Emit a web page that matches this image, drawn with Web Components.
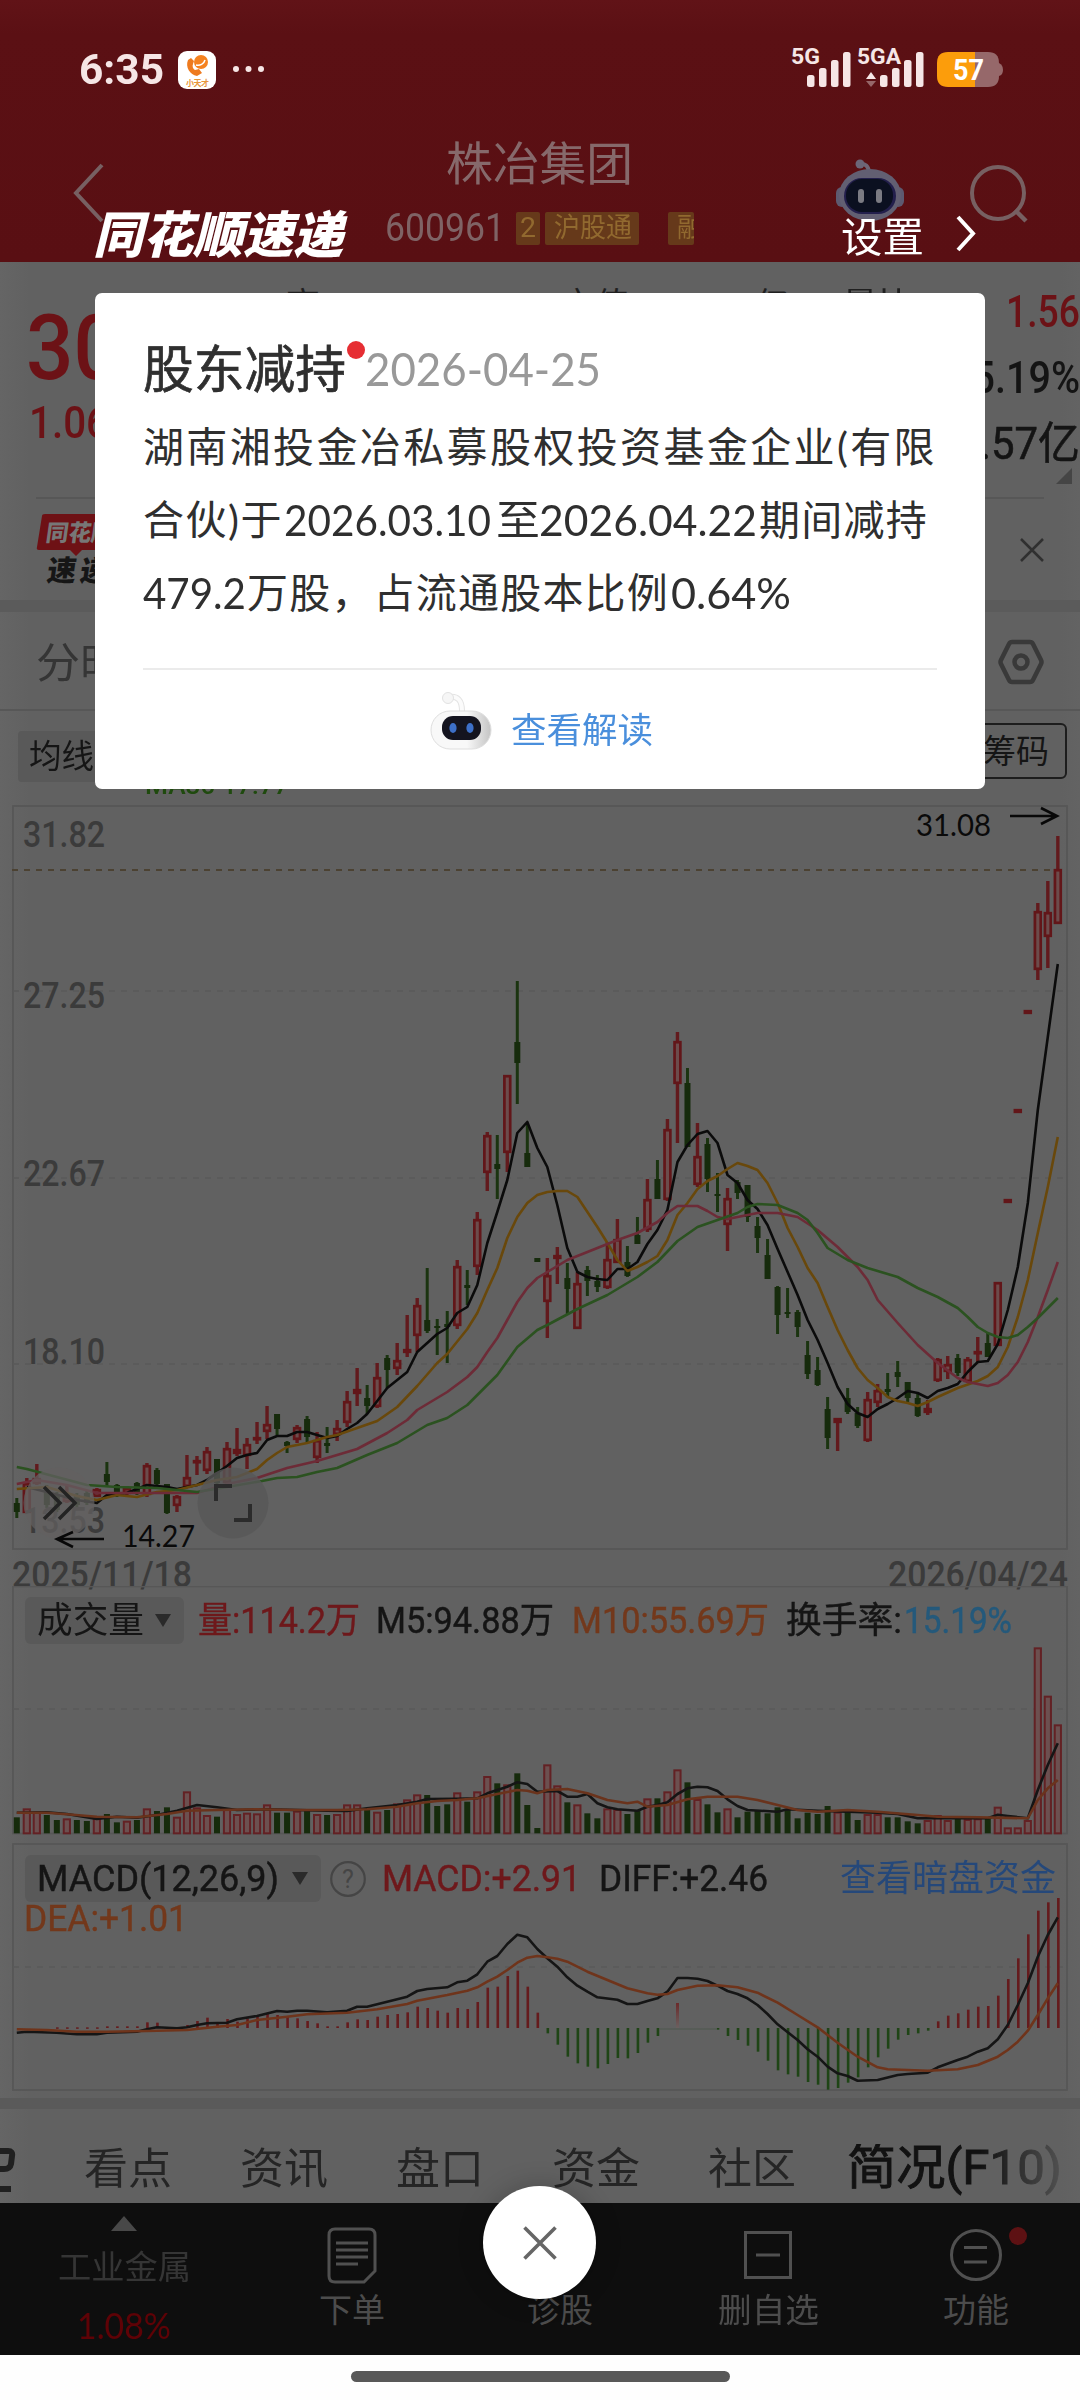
<!DOCTYPE html>
<html lang="zh-CN">
<head>
<meta charset="utf-8">
<title>株冶集团 600961</title>
<style>
  html, body { margin: 0; padding: 0; background: #616161; }
  body { width: 1080px; height: 2400px; overflow: hidden; font-family: Roboto, "Noto Sans CJK SC", sans-serif; }
</style>
</head>
<body>
<stock-page></stock-page>

<script>
/* Base class: renders markup and styles into an open shadow root. */
class Base extends HTMLElement {
  constructor() {
    super();
    this.attachShadow({ mode: 'open' });
  }
  connectedCallback() {
    if (this.ready) return;
    this.ready = true;
    this.shadowRoot.innerHTML = '<style>*{box-sizing:border-box}' + this.css() + '</style>' + this.html();
  }
  css() { return ':host{display:block}'; }
  html() { return '<slot></slot>'; }
}

/* One line of text stretched or squeezed to an exact width. */
customElements.define('fit-text', class extends Base {
  css() {
    return `:host{display:block;flex:none;white-space:nowrap;line-height:1}
      span{display:inline-block;transform-origin:0 0;line-height:1;vertical-align:top}`;
  }
  html() { return '<span><slot></slot></span>'; }
  connectedCallback() {
    super.connectedCallback();
    const w = +this.getAttribute('w');
    const span = this.shadowRoot.querySelector('span');
    this.style.width = w + 'px';
    const natural = span.getBoundingClientRect().width;
    if (this.hasAttribute('spaced')) {
      span.style.letterSpacing = (w - natural) / this.textContent.length + 'px';
    } else if (natural) {
      span.style.transform = 'scaleX(' + w / natural + ')';
    }
  }
});

customElements.define('status-bar', class extends Base {
  css() {
    return `:host{display:flex;height:104px;padding:34px 77px 0 79px;align-items:flex-start;color:#f6e6e6}
      .time{font-size:43px;font-weight:700;margin-top:14px}
      svg{flex:none;display:block}
      .app{margin:17px 0 0 14px}.dots{margin:31px 0 0 16px}.sig{margin:12px -3px 0 auto}.bat{margin:18px 0 0 16px}`;
  }
  html() {
    const bars = x => [12, 19, 27, 35].map((h, i) =>
      `<rect x="${x + i * 12}" y="${41 - h}" width="7.5" height="${h}" rx="2.5" fill="#f6e6e6"/>`).join('');
    return `<fit-text class="time" w="85">6:35</fit-text>
    <svg class="app" width="38" height="38" viewBox="0 0 38 38"><rect width="38" height="38" rx="9" fill="#fff"/>
      <path d="M10 9c-3 7 2 15 9 16l5-3-3-4-4 1c-2-1-3-4-2-6l1-3-3-3z" fill="#ee7a1e"/><circle cx="23" cy="11" r="7" fill="#f58220"/>
      <path d="M18 14c4 1 8-1 9-5" stroke="#fff" stroke-width="1.5" fill="none"/>
      <text x="8" y="35" font-size="8" font-weight="700" fill="#e8963c" textLength="23" font-family="Noto Sans CJK SC">小天才</text></svg>
    <svg class="dots" width="32" height="8"><g fill="#f6e6e6"><circle cx="4" cy="4" r="3"/><circle cx="16.500" cy="4" r="3"/><circle cx="29" cy="4" r="3"/></g></svg>
    <svg class="sig" width="133" height="42" viewBox="0 0 133 42"><g font-family="Roboto" font-weight="700" font-size="22" fill="#f6e6e6">
      <text x="0" y="18" textLength="29" lengthAdjust="spacingAndGlyphs">5G</text><text x="66" y="18" textLength="44" lengthAdjust="spacingAndGlyphs">5GA</text></g>
      ${bars(16)}${bars(89)}
      <path d="M75 33l5-7 5 7z" fill="#f6e6e6"/><path d="M75 35l5 6 5-6z" fill="#96686a"/></svg>
    <svg class="bat" width="66" height="35" viewBox="0 0 66 35"><path d="M60 11h2q4 2 4 7t-4 6h-2z" fill="#96686a"/>
      <path d="M38 0h13q11 0 11 11v13q0 11-11 11H38z" fill="#96686a"/><path d="M38 0H11Q0 0 0 11v13q0 11 11 11h27z" fill="#fc9d0b"/>
      <text x="16" y="28" font-family="Roboto" font-weight="700" font-size="29" fill="#fff" textLength="31" lengthAdjust="spacingAndGlyphs">57</text></svg>`;
  }
});

customElements.define('app-header', class extends Base {
  css() {
    return `:host{display:block;height:262px;background:linear-gradient(#611317 0,#5b1014 34px,#590f13);color:#86696b}
      .bar{display:flex;align-items:flex-start;padding-left:73px}
      svg{flex:none;display:block}
      .mid{width:309px;margin:37px 0 0 281px}
      .name{font-size:46px;margin-left:61px}
      .sub{display:flex;height:33px;margin-top:25px;align-items:center;color:#7f6365;font-size:39px}
      .tag{height:33px;background:#66391a;color:#91692f;font-size:27px;display:flex;align-items:center;overflow:hidden;border-radius:2px;flex:none}`;
  }
  html() {
    return `<status-bar></status-bar><div class="bar">
    <svg style="margin-top:58px" width="31" height="62"><path d="M29 3L3 31L29 59" fill="none" stroke="#776062" stroke-width="4"/></svg>
    <div class="mid"><fit-text class="name" w="187">株冶集团</fit-text>
      <div class="sub"><fit-text w="120">600961</fit-text>
        <div class="tag" style="width:24px;margin-left:11px;padding-left:4px"><fit-text w="16">2</fit-text></div>
        <div class="tag" style="width:94px;margin-left:5px;padding-left:9px"><fit-text w="78">沪股通</fit-text></div>
        <div class="tag" style="width:26px;margin-left:29px;padding-left:9px"><fit-text w="26">融</fit-text></div></div></div>
    <svg style="margin:55px 0 0 142px" width="68" height="66" viewBox="0 0 68 66">
      <path d="M24 5q8-1 9 8" fill="none" stroke="#6f6677" stroke-width="4"/><circle cx="24" cy="5" r="4.500" fill="#6b6678"/>
      <rect x="0" y="28" width="12" height="20" rx="6" fill="#5d5a70"/><rect x="56" y="28" width="12" height="20" rx="6" fill="#5d5a70"/>
      <ellipse cx="34" cy="36" rx="31" ry="26" fill="#625f72"/><rect x="8" y="19" width="52" height="36" rx="18" fill="#231f4c"/><rect x="10" y="20" width="47" height="33" rx="16" fill="#0b1020"/>
      <rect x="22" y="30" width="6" height="14" rx="3" fill="#7b7b83"/><rect x="40" y="30" width="6" height="14" rx="3" fill="#7b7b83"/></svg>
    <svg style="margin:61px 0 0 66px" width="58" height="58"><circle cx="28" cy="28" r="26" fill="none" stroke="#776062" stroke-width="4"/><path d="M45 45L56 56" stroke="#776062" stroke-width="4.500"/></svg></div>`;
  }
});

customElements.define('quote-strip', class extends Base {
  css() {
    return `:host{display:flex;height:235px;position:relative;overflow:hidden;justify-content:space-between}
      .l{width:110px;color:#6c1216;font-weight:500;padding:42px 0 0 26px;flex:none}
      .big{font-size:90px}.chg{font-size:45px;margin:6px 0 0 3px}
      .m{display:flex;padding-top:26px;width:770px;font-size:34px;color:#202020;flex:none}
      .r{display:flex;flex-direction:column;align-items:flex-end;font-size:44px;font-weight:500;color:#141414;padding-top:28px;gap:22px;width:200px;flex:none}
      .cn{font-weight:400;-webkit-text-stroke:.6px #141414}
      .red{color:#6c1216}
      i{display:block;border:8px solid transparent;border-right-color:#454545;border-bottom-color:#454545;margin:-20px 8px 0 0}`;
  }
  html() {
    return `<div class="l"><fit-text class="big" w="95">30</fit-text><fit-text class="chg" w="80">1.06</fit-text></div>
      <div class="m"><fit-text w="34" style="margin-left:176px">高</fit-text><fit-text w="68" style="margin-left:241px">市值</fit-text>
      <fit-text w="34" style="margin-left:126px">亿</fit-text><fit-text w="72" style="margin-left:53px">量比</fit-text></div>
      <div class="r"><fit-text w="74" class="red">1.56</fit-text><fit-text w="130">15.19%</fit-text><fit-text w="100" class="cn">.57亿</fit-text><i></i></div>`;
  }
});

customElements.define('promo-row', class extends Base {
  css() {
    return `:host{display:flex;justify-content:space-between;height:103px;margin:0 36px;border-top:2px solid #575757}
      svg{display:block;flex:none}`;
  }
  html() {
    return `<svg width="120" height="80" viewBox="0 0 120 80" style="margin-top:14px"><path d="M6 3q0-2 3-2h105l-6 36H46l-6 6-6-6H3q-3 0-2-3z" fill="#6e1115"/>
      <g font-family="Noto Sans CJK SC" font-weight="900" font-size="23"><text transform="translate(9 28) skewX(-8)" fill="#777" textLength="68" lengthAdjust="spacingAndGlyphs">同花顺</text>
      <text transform="translate(10 68) skewX(-8)" font-size="29" fill="#161616" textLength="62">速递</text></g></svg>
      <svg width="24" height="24" style="margin:39px 0 0"><path d="M1 1L23 23M23 1L1 23" stroke="#303030" stroke-width="2.500"/></svg>`;
  }
});

customElements.define('period-tabs', class extends Base {
  css() {
    return `:host{display:flex;justify-content:space-between;align-items:center;height:111px;border-top:12px solid #5b5b5b;border-bottom:2px solid #575757;padding:2px 36px 0;font-size:42px;color:#353535}
      fit-text{margin-top:4px}`;
  }
  html() {
    return `<fit-text w="88">分时</fit-text><svg width="46" height="46" viewBox="0 0 46 46" fill="none" stroke="#393939" stroke-width="4.500"><path d="M14 3h18q2 0 3 2l8 16q1 2 0 4l-8 16q-1 2-3 2H14q-2 0-3-2L3 25q-1-2 0-4L11 5q1-2 3-2z" stroke-linejoin="round"/><circle cx="23" cy="23" r="6.500"/></svg>`;
  }
});

customElements.define('ma-row', class extends Base {
  css() {
    return `:host{display:flex;justify-content:space-between;height:94px;align-items:flex-start;font-size:33px;color:#151515;overflow:hidden}
      .chip{background:#595959;width:120px;height:51px;margin:20px 0 0 18px;padding:9px 0 0 11px;border-radius:4px}
      .ma{font-size:25px;font-weight:500;color:#1f4a0e;margin:62px auto 0 7px}
      .box{border:2px solid #1d1d1d;border-radius:6px;width:110px;height:56px;margin:12px 13px 0 0;padding:10px 0 0 24px}`;
  }
  html() {
    return `<div class="chip"><fit-text w="65">均线</fit-text></div><fit-text class="ma" w="144">MA30 17.77</fit-text><div class="box"><fit-text w="66">筹码</fit-text></div>`;
  }
});

/* ---------- chart data ---------- */
const X = i => 16.800 + 10.010 * i;
const CANDLES = [
 'g 1498 1518 1503 1512','r 1478 1513 1483 1513','r 1464 1485 1478 1484','g 1485 1508 1490 1505','g 1492 1512 1495 1510','r 1485 1503 1496 1502','g 1493 1507 1495 1505','g 1491 1505 1493 1503','r 1488 1497 1489 1497','g 1462 1487 1474 1482',
 'g 1484 1497 1485 1493','r 1486 1496 1488 1494','g 1482 1495 1483 1493','r 1463 1497 1465 1495','g 1468 1485 1470 1484','g 1484 1514 1484 1513','r 1495 1512 1496 1506','r 1455 1488 1477 1487','r 1456 1475 1460 1463','r 1447 1474 1451 1471',
 'g 1459 1487 1459 1483','r 1442 1484 1448 1483','r 1428 1456 1449 1454','r 1438 1469 1444 1456','r 1422 1444 1437 1440','r 1406 1439 1424 1432','g 1414 1435 1414 1429','g 1441 1453 1442 1446','r 1425 1443 1427 1440','g 1416 1443 1419 1437',
 'r 1432 1463 1440 1458','g 1427 1453 1443 1446','r 1420 1441 1428 1435','r 1391 1427 1401 1423','r 1368 1406 1389 1394','g 1385 1414 1398 1406','r 1363 1408 1377 1407','g 1355 1388 1358 1370','r 1343 1375 1360 1369','r 1315 1357 1349 1353',
 'r 1298 1352 1305 1336','g 1268 1333 1320 1331','g 1319 1355 1326 1328','g 1311 1363 1324 1327','r 1260 1329 1266 1326','g 1270 1305 1285 1288','r 1212 1275 1219 1267','r 1132 1191 1135 1173','g 1135 1199 1164 1169','r 1075 1172 1075 1153',
 'g 981 1104 1042 1063','g 1123 1167 1153 1167','g 1258 1262 1258 1262','r 1258 1338 1275 1302','r 1247 1284 1255 1259','g 1263 1315 1278 1289','r 1272 1329 1283 1329','g 1266 1296 1270 1281','g 1275 1292 1281 1287','r 1242 1289 1259 1288',
 'r 1219 1263 1239 1263','g 1246 1277 1262 1276','g 1217 1244 1235 1244','r 1179 1232 1199 1230','g 1160 1199 1179 1199','r 1119 1201 1129 1200','r 1032 1143 1041 1084','g 1068 1147 1083 1147','r 1123 1187 1156 1185','g 1138 1192 1144 1179',
 'g 1173 1212 1194 1196','r 1188 1251 1198 1225','g 1180 1199 1182 1193','g 1185 1222 1185 1217','g 1217 1253 1226 1238','g 1239 1279 1255 1279','g 1286 1334 1287 1315','g 1288 1318 1312 1314','g 1310 1337 1312 1327','g 1341 1379 1355 1374',
 'g 1357 1386 1370 1385','g 1397 1449 1409 1438','r 1418 1451 1418 1423','g 1388 1414 1398 1412','g 1407 1428 1413 1426','r 1392 1442 1399 1441','r 1384 1407 1390 1403','g 1373 1397 1389 1392','g 1361 1387 1372 1377','g 1382 1402 1382 1398',
 'g 1393 1417 1398 1416','r 1400 1415 1408 1413','r 1358 1382 1359 1381','r 1356 1379 1364 1372','g 1354 1376 1358 1373','r 1357 1383 1359 1382','r 1337 1362 1351 1353','g 1333 1357 1343 1357','r 1282 1346 1282 1346','r 1201 1201 1199 1203',
 'r 1111 1111 1109 1113','r 1012 1012 1010 1014','r 903 980 911 970','r 881 968 912 937','r 836 924 869 924'
].map(s => { const p = s.split(' '); return { up: p[0] === 'r', hi: +p[1], lo: +p[2], a: +p[3], b: +p[4] }; });

const MA = {
 '#0b0b0b': '1:1487 3:1492 6:1500 8:1503 9:1495 11:1493 13:1485 15:1487 16:1489 18:1485 19:1480 21:1466 22:1458 23:1455 24:1453 25:1440 26:1436 27:1436 28:1432 29:1432 30:1435 31:1438 32:1436 33:1429 34:1423 35:1414 36:1401 37:1388 38:1380 39:1372 40:1352 41:1343 42:1334 43:1328 44:1313 45:1307 46:1285 47:1243 48:1212 49:1180 50:1133 51:1122 52:1148 53:1167 54:1205 55:1248 56:1272 57:1277 58:1279 59:1280 60:1269 61:1269 62:1262 63:1244 64:1230 65:1210 66:1162 67:1145 68:1134 69:1131 70:1143 71:1175 72:1183 73:1200 74:1209 75:1225 76:1249 77:1272 78:1295 79:1320 80:1340 81:1363 82:1387 83:1404 84:1413 85:1417 86:1409 87:1404 88:1398 89:1391 90:1393 91:1398 92:1391 93:1388 94:1384 95:1372 96:1362 97:1361 98:1344 99:1310 100:1267 101:1203 102:1110 103:1037 104:964',
 '#69480b': '0:1489 3:1487 6:1496 8:1500 10:1495 12:1497 14:1492 16:1490 18:1485 20:1480 22:1477 24:1469 25:1460 26:1453 27:1447 29:1443 31:1437 32:1435 34:1428 36:1421 38:1407 40:1386 42:1363 43:1354 45:1329 46:1313 47:1290 48:1268 49:1238 50:1217 51:1203 52:1195 53:1192 54:1191 55:1191 56:1197 57:1212 58:1227 59:1243 60:1260 61:1271 62:1267 63:1262 64:1256 65:1240 66:1215 67:1203 68:1189 69:1181 70:1176 71:1169 72:1163 73:1166 74:1170 75:1183 76:1203 77:1228 78:1247 79:1268 80:1283 81:1307 82:1330 83:1350 84:1368 85:1380 86:1388 87:1397 88:1401 89:1403 90:1406 91:1402 92:1397 94:1388 96:1381 97:1376 98:1367 99:1347 100:1317 101:1280 102:1233 103:1187 104:1137',
 '#6d2b37': '0:1484 2:1480 5:1485 8:1493 11:1493 14:1493 18:1493 21:1484 24:1478 27:1468 30:1461 34:1449 37:1433 39:1420 40:1410 42:1398 43:1392 45:1377 46:1367 47:1352 48:1338 49:1320 50:1302 51:1288 52:1278 53:1272 55:1260 57:1252 60:1240 62:1233 64:1222 65:1213 66:1206 68:1206 69:1211 70:1217 71:1219 72:1217 74:1213 76:1213 78:1217 80:1230 82:1247 84:1267 85:1280 86:1300 88:1323 90:1345 92:1363 94:1378 95:1382 97:1386 98:1383 99:1375 100:1362 101:1342 102:1317 103:1290 104:1262',
 '#2b5220': '0:1467 1:1469 4:1477 7:1485 10:1487 14:1488 18:1492 21:1487 24.500:1481 26:1478 28:1477 30:1472 32:1468 35:1455 38:1443 41:1425 43:1418 45:1405 48:1375 50:1347 52:1330 53:1325 56:1309 59:1295 62:1277 64:1262 66:1241 68:1227 70:1220 72:1213 73:1207 74:1204 76:1205 78:1213 79:1220 80:1233 81:1248 83:1260 85:1268 88:1277 90:1288 92:1297 94:1308 95:1317 96:1327 97:1333 98:1337 99:1338 100:1335 101:1327 102:1318 103:1308 104:1298'
};

/* Lower-panel values sit on a grid of a third of a pixel that starts at y = 1590. */
const Y3 = v => 1590 + v / 3;
const VOL = [682,655,665,675,690,685,690,693,683,672,697,692,690,655,663,652,680,604,652,675,680,655,672,668,670,643,668,668,662,662,672,675,672,643,643,660,665,660,640,628,613,615,648,643,607,635,604,558,580,583,550,645,714,523,586,637,643,670,685,655,657,672,660,625,625,604,538,577,627,643,667,655,682,665,662,670,652,660,685,668,672,648,665,660,690,672,672,682,682,694,700,690,675,690,685,687,685,685,650,712,712,690,172,317,403];
const VMA = {
 '#151515': '0:668 3:667 5:672 8:687 10:680 12:683 14:675 16:662 18:645 20:652 22:660 25:658 28:660 31:662 33:663 35:655 38:645 40:635 41:627 44:626 46:625 47:610 48:600 49:590 50:577 51:582 52:605 54:603 55:620 56:620 57:612 58:640 59:652 60:658 62:662 63:650 64:645 65:637 66:612 67:595 68:590 69:592 70:603 71:628 72:648 73:660 76:665 77:658 80:662 83:665 86:668 88:672 90:685 93:685 97:685 98:674 99:678 101:685 102:600 103:525 104:460',
 '#6a331c': '0:668 3:668 5:673 8:680 12:682 15:672 17:662 20:660 24:658 28:660 32:660 35:658 38:650 40:640 42:633 44:630 46:625 48:612 50:600 51:602 52:610 53:600 55:597 57:610 59:630 61:640 62:635 63:650 65:645 67:628 69:620 72:620 74:630 76:645 78:660 80:665 83:660 86:665 90:675 92:680 96:682 101:685 102:630 103:595 104:570'
};
const HIST = '4:1312 5:1312 6:1312 7:1312 8:1312 9:1309 10:1309 11:1309 12:1309 13:1297 14:1298 16:1311 17:1305 18:1293 19:1283 20:1300 21:1287 22:1295 23:1285 24:1280 25:1270 26:1275 27:1280 28:1285 29:1293 30:1300 31:1309 32:1309 33:1297 34:1288 35:1290 36:1280 37:1275 38:1272 39:1267 40:1250 41:1254 42:1262 43:1268 44:1254 45:1257 46:1236 47:1193 48:1190 49:1158 50:1142 51:1190 52:1268 53:1330 54:1364 55:1400 56:1420 57:1430 58:1435 59:1422 60:1404 61:1405 62:1389 63:1358 64:1338 70:1319 71:1338 72:1350 73:1367 74:1385 75:1412 76:1441 77:1453 78:1460 79:1476 80:1484 81:1499 82:1494 83:1478 84:1462 85:1432 86:1402 87:1376 88:1349 89:1335 90:1330 91:1322 92:1294 93:1277 94:1270 95:1259 96:1250 97:1248 98:1217 99:1167 100:1105 101:1033 102:962 103:937 104:924';
const MACD = {
 '#151515': '0:1328 1:1325 4:1328 6:1333 8:1333 9:1328 12:1325 13:1318 14:1312 16:1315 17:1312 18:1305 19:1300 21:1298 22:1288 24:1278 26:1263 27:1265 28:1262 29:1262 31:1267 33:1262 34:1250 35:1250 37:1235 39:1220 40:1203 41:1197 43:1192 44:1177 45:1172 46:1153 47:1115 48:1098 49:1062 50:1034 51:1042 52:1077 53:1105 54:1130 55:1162 56:1187 57:1205 58:1222 60:1229 61:1242 62:1242 63:1233 64:1225 65:1205 66:1164 67:1164 68:1166 69:1173 70:1187 71:1203 72:1212 73:1225 74:1245 75:1272 76:1303 78:1350 79:1378 80:1400 81:1430 82:1450 83:1458 84:1472 86:1470 88:1455 89:1452 91:1448 92:1432 94:1410 95:1400 96:1385 97:1375 98:1348 99:1305 100:1245 101:1180 102:1100 103:1035 104:982',
 '#6f341b': '0:1318 3:1320 6:1325 9:1325 13:1323 17:1320 20:1310 22:1305 24:1290 27:1280 29:1273 33:1268 36:1258 39:1242 40:1232 43:1215 45:1202 46:1192 47:1175 48:1160 49:1140 50:1118 51:1103 52:1098 53:1102 54:1106 55:1115 57:1145 59:1170 61:1195 63:1210 64:1214 65:1212 66:1200 68:1187 70:1186 72:1192 74:1208 76:1238 78:1275 80:1312 82:1358 84:1400 86:1432 87:1438 89:1440 91:1442 94:1438 96:1425 98:1400 99:1380 100:1355 101:1322 102:1275 103:1225 104:1180'
};
const lines = (set, fy) => Object.entries(set).map(([c, s]) =>
  `<polyline fill="none" stroke="${c}" stroke-width="2.600" stroke-linejoin="round" points="${s.split(' ').map(p => { const [i, v] = p.split(':'); return X(+i).toFixed(1) + ',' + fy(+v).toFixed(1); }).join(' ')}"/>`).join('');
const grid = (y, c = '#5a5a5a') => `<path d="M13 ${y}H1067" stroke="${c}" stroke-width="1.500" stroke-dasharray="6 6"/>`;
const frame = (y, h) => `<rect x="13" y="${y}" width="1054" height="${h}" fill="none" stroke="#575757" stroke-width="1.800"/>`;

customElements.define('candle-chart', class extends Base {
  css() { return ':host{display:block;height:781px}svg{display:block;overflow:visible}'; }
  html() {
    const bodies = CANDLES.map((c, i) => {
      const x = X(i), top = Math.min(c.a, c.b), h = Math.max(2, c.b - c.a);
      if (c.up) return `<path d="M${x} ${c.hi}V${top}M${x} ${top + h}V${c.lo}" stroke="#621a1d" stroke-width="3.400"/>
        <rect x="${x - 2.900}" y="${top + 1.200}" width="5.800" height="${Math.max(1, h - 2.400)}" fill="#6c4c4c" stroke="#621619" stroke-width="2.700"/>`;
      return `<path d="M${x} ${c.hi}V${c.lo}" stroke="#1b3410" stroke-width="3"/><rect x="${x - 3}" y="${top}" width="6" height="${h}" fill="#162b0c"/>`;
    }).join('');
    const t = (s, x, y, w, f = 36, c = '#3b3b3b', more = '') => `<text x="${x}" y="${y}" font-size="${f}" fill="${c}" textLength="${w}" lengthAdjust="spacingAndGlyphs" ${more}>${s}</text>`;
    const lato = 'font-family="Lato" font-weight="400"';
    return `<svg width="1080" height="781" viewBox="0 805 1080 781" font-family="Roboto" font-weight="500">
      ${frame(806, 743)}${grid(991)}${grid(1178)}${grid(1364)}
      <path d="M12 870H1060" stroke="#4c4232" stroke-width="1.800" stroke-dasharray="6 6"/>
      ${bodies}${lines(MA, v => v)}
      ${t('31.82', 23, 847, 82)}${t('27.25', 23, 1008, 82)}${t('22.67', 23, 1186, 82)}${t('18.10', 23, 1364, 82)}${t('13.53', 23, 1533, 82)}
      ${t('2025/11/18', 12, 1587, 180)}${t('2026/04/24', 888, 1587, 180)}
      <circle cx="59" cy="1503" r="35.500" fill="#636060" opacity=".75"/><circle cx="233" cy="1503" r="35.500" fill="#585858" opacity=".8"/>
      <path d="M44 1487L60 1503L44 1519M59 1487L75 1503L59 1519" fill="none" stroke="#232323" stroke-width="3.500"/>
      <path d="M216 1501V1486H232M250 1504V1520H234" fill="none" stroke="#2b2b2b" stroke-width="4"/>
      ${t('31.08', 916, 836, 75, 31, '#0a0a0a', lato)}${t('14.27', 122, 1547, 73, 31, '#0a0a0a', lato)}
      <path d="M1010 816H1057M1041 808L1057 816L1041 824M104 1539H57M73 1532L57 1539L73 1547" fill="none" stroke="#080808" stroke-width="2.600"/>
    </svg>`;
  }
});

const panelCss = `
  :host{display:grid;font-size:36px;font-weight:400;color:#151515;-webkit-text-stroke:.45px}
  svg.plot,.over{grid-area:1/1}
  svg{display:block}
  .row{display:flex;align-items:center;padding-left:25px}
  .chip{display:flex;align-items:center;justify-content:space-between;height:47px;background:#595959;border-radius:6px;padding:0 13px 0 12px;flex:none}
  .cn{-webkit-text-stroke:0}
  i{border:8.500px solid transparent;border-top:13px solid #2a2a2a;border-bottom:0}
  .red{color:#6e181b}.org{color:#73381b}.blue{color:#24597b}`;

customElements.define('volume-panel', class extends Base {
  css() { return panelCss + '.over{padding-top:11px}'; }
  html() {
    const bars = VOL.map((v, i) => CANDLES[i].up
      ? `<rect x="${X(i) - 3.100}" y="${Y3(v) + 1}" width="6.200" height="${Y3(730) - Y3(v) - 1}" fill="#6c5050" stroke="#632124" stroke-width="2"/>`
      : `<rect x="${X(i) - 3}" y="${Y3(v)}" width="6" height="${Y3(730) - Y3(v)}" fill="#162b0c"/>`).join('');
    return `<svg class="plot" width="1080" height="257" viewBox="0 1586 1080 257">${frame(1586.500, 247)}${grid(1709)}${bars}${lines(VMA, Y3)}</svg>
    <div class="over"><div class="row"><div class="chip" style="width:159px"><fit-text w="107" class="cn">成交量</fit-text><i></i></div>
      <fit-text w="162" class="red" style="margin-left:14px">量:114.2万</fit-text><fit-text w="178" style="margin-left:16px">M5:94.88万</fit-text>
      <fit-text w="197" class="org" style="margin-left:18px">M10:55.69万</fit-text><fit-text w="116" style="margin-left:17px">换手率:</fit-text>
      <fit-text w="108" class="blue" style="margin-left:2px">15.19%</fit-text></div></div>`;
  }
});

customElements.define('macd-panel', class extends Base {
  css() { return panelCss + '.over{padding-top:12px}.dea{margin:-1px 0 0 24px}.link{color:#25487a;margin:0 24px 0 auto}'; }
  html() {
    const bars = HIST.split(' ').map(p => { const [i, v] = p.split(':').map(Number); const y = Y3(v);
      return `<rect x="${X(i) - .800}" y="${Math.min(y, 2028)}" width="2.600" height="${Math.max(1.500, Math.abs(2028 - y))}" fill="${v > 1315 ? '#1f4516' : '#651b1d'}"/>`; }).join('');
    return `<svg class="plot" width="1080" height="255" viewBox="0 1843 1080 255">${frame(1844, 246)}${grid(1967)}${bars}
      <defs><linearGradient id="fade" x2="0" y2="1"><stop stop-color="#6b2a2a"/><stop offset="1" stop-color="#6b6060"/></linearGradient></defs>
      <rect x="676" y="2003" width="3" height="25" fill="url(#fade)"/><path d="M660 2029H717" stroke="#555b55" stroke-width="1.500"/>
      ${lines(MACD, Y3)}</svg>
    <div class="over"><div class="row"><div class="chip" style="width:296px"><fit-text w="242">MACD(12,26,9)</fit-text><i></i></div>
      <svg width="38" height="38" style="margin-left:8px"><circle cx="19" cy="19" r="16.800" fill="none" stroke="#454545" stroke-width="2.200"/><text x="13" y="28" font-size="25" font-weight="400" fill="#454545" font-family="Roboto">?</text></svg>
      <fit-text w="199" class="red" style="margin-left:15px">MACD:+2.91</fit-text><fit-text w="169" style="margin-left:18px">DIFF:+2.46</fit-text>
      <fit-text w="216" class="link cn">查看暗盘资金</fit-text></div><fit-text w="164" class="dea org">DEA:+1.01</fit-text></div>`;
  }
});

customElements.define('info-tabs', class extends Base {
  css() {
    return `:host{display:flex;height:105px;border-top:11px solid #5a5a5a;font-size:43px;color:#252525;overflow:hidden}
      fit-text{margin:39px 0 0 68px}svg{display:block;margin:37px 0 0}
      .on{font-size:48px;margin:35px 0 0 51px;color:#121212;-webkit-text-stroke:.9px #121212;-webkit-mask-image:linear-gradient(90deg,#000 62%,rgba(0,0,0,.2) 100%);mask-image:linear-gradient(90deg,#000 62%,rgba(0,0,0,.2) 100%)}`;
  }
  html() {
    return `<svg width="16" height="56"><path d="M-4 5H8q5 0 4 5l-1 8q-1 5-7 5H-4M-4 43H11" fill="none" stroke="#202020" stroke-width="6"/></svg>
      <fit-text w="88">看点</fit-text><fit-text w="88">资讯</fit-text><fit-text w="88">盘口</fit-text><fit-text w="88">资金</fit-text><fit-text w="88">社区</fit-text><fit-text w="215" class="on">简况(F10)</fit-text>`;
  }
});

customElements.define('nav-item', class extends Base {
  css() { return `:host{display:flex;flex-direction:column;align-items:center;width:208px;flex:none;font-size:33px;color:#4c4c4c;padding-top:24px}
    .ico{height:56px;margin-bottom:11px}`; }
  html() { return `<div class="ico"><slot name="icon"></slot></div><slot></slot>`; }
});

customElements.define('bottom-nav', class extends Base {
  css() {
    return `:host{display:flex;height:152px;background:#0e0e0e}
      .sector{width:248px;display:flex;flex-direction:column;align-items:center;color:#353535;font-size:33px;padding-top:13px;flex:none}
      i{border:13.500px solid transparent;border-bottom:15px solid #484848;border-top:0;margin-bottom:20px}
      .pct{color:#5e0206;font-family:Lato;font-size:36px;margin-top:23px}
      svg{display:block;overflow:visible}`;
  }
  html() {
    return `<div class="sector"><i></i><fit-text w="133">工业金属</fit-text><fit-text w="94" class="pct">1.08%</fit-text></div>
      <nav-item><svg slot="icon" width="50" height="56" fill="none" stroke="#505050" stroke-width="3"><path d="M8 2H42q6 0 6 6V44L37 55H8q-6 0-6-6V8q0-6 6-6z"/><path d="M9 16H41M9 23H41M9 30H41M9 37H31"/></svg><fit-text w="66">下单</fit-text></nav-item>
      <nav-item><svg slot="icon" width="50" height="56"></svg><fit-text w="66">诊股</fit-text></nav-item>
      <nav-item><svg slot="icon" width="50" height="56" fill="none" stroke="#505050" stroke-width="3"><path d="M2.500 5.500H47.500V50.500H2.500zM13 28H37"/></svg><fit-text w="101">删自选</fit-text></nav-item>
      <nav-item><svg slot="icon" width="52" height="56" fill="none" stroke="#505050" stroke-width="3"><circle cx="26" cy="28" r="24.500"/><path d="M14 20.500H37M14 35H37"/><circle cx="68" cy="9" r="9" fill="#5d1113" stroke="none"/></svg><fit-text w="66">功能</fit-text></nav-item>`;
  }
});

customElements.define('home-bar', class extends Base {
  css() { return ':host{display:flex;height:45px;background:#fefefe;justify-content:center;padding-top:16px}div{width:379px;height:11px;border-radius:6px;background:#585858}'; }
  html() { return '<div></div>'; }
});

customElements.define('notice-overlay', class extends Base {
  css() {
    return `:host{position:absolute;inset:0;display:flex;flex-direction:column;padding-top:207px}
      svg{display:block;flex:none}
      .top{display:flex;height:86px;padding:0 103px 0 93px;color:#fff;align-items:flex-start}
      .brand{font-size:50px;font-weight:900;font-style:italic;margin-top:4px}
      .set{font-size:41px;margin:11px 31px 0 auto}
      .card{margin:0 95px;height:496px;background:#fff;border-radius:7px;padding:0 48px;color:#2f2f2f;font-family:Lato,"Noto Sans CJK SC",sans-serif}
      .head{display:flex;align-items:flex-start;padding-top:50px;height:117px}
      .head b{width:18px;height:18px;border-radius:50%;background:#e62e33;margin:-2px 0 0 1px;flex:none}
      .t{font-size:51px;-webkit-text-stroke:.7px #2f2f2f}
      .date{font-size:46px;color:#999;margin-top:3px}
      .line{display:flex;height:73px;align-items:center;font-size:41px}
      .n{font-size:43px}
      .foot{display:flex;height:120px;margin-top:39px;border-top:2px solid #ebebeb;justify-content:center;align-items:center;font-size:35px;color:#4a8fdc;padding-left:2px}
      .close{width:113px;height:113px;border-radius:50%;background:#fff;margin:1397px 0 0 483px;display:flex;align-items:center;justify-content:center;box-shadow:0 0 26px rgba(0,0,0,.22);flex:none}`;
  }
  html() {
    return `<div class="top"><fit-text class="brand" w="250">同花顺速递</fit-text><fit-text class="set" w="83">设置</fit-text>
      <svg width="22" height="38" style="margin-top:8px"><path d="M3 2L18 18.500L3 35" fill="none" stroke="#fff" stroke-width="4"/></svg></div>
    <div class="card">
      <div class="head"><fit-text class="t" w="203">股东减持</fit-text><b></b><fit-text class="date" w="236">2026-04-25</fit-text></div>
      <div class="line"><fit-text w="794" spaced>湖南湘投金冶私募股权投资基金企业(有限</fit-text></div>
      <div class="line"><fit-text w="140" spaced>合伙)于</fit-text><fit-text w="207" class="n" style="margin-left:1px">2026.03.10</fit-text><fit-text w="44" style="margin-left:5px">至</fit-text><fit-text w="218" class="n" style="margin-left:-1px">2026.04.22</fit-text><fit-text w="169" spaced style="margin-left:2px">期间减持</fit-text></div>
      <div class="line"><fit-text w="103" class="n">479.2</fit-text><fit-text w="422" spaced style="margin-left:1px">万股，占流通股本比例</fit-text><fit-text w="120" class="n" style="margin-left:2px">0.64%</fit-text></div>
      <div class="foot">
        <svg width="64" height="60" viewBox="0 0 64 60" style="margin:-17px 18px 0 0"><defs><linearGradient id="sh"><stop offset=".6" stop-color="#f8f8f8"/><stop offset="1" stop-color="#c4c4c4"/></linearGradient></defs>
          <path d="M20 6q13-2 13 14" fill="none" stroke="#e4e4e4" stroke-width="6"/><path d="M20 6q13-2 13 14" fill="none" stroke="#fbfbfb" stroke-width="4"/><circle cx="19" cy="7" r="5.500" fill="#f6f6f6" stroke="#e2e2e2"/>
          <rect x="2" y="20" width="60" height="38" rx="19" fill="url(#sh)" stroke="#dedede"/>
          <rect x="13" y="25" width="39" height="24" rx="11" fill="#14141f"/><ellipse cx="24" cy="37" rx="3.600" ry="5" fill="#3d70c8"/><ellipse cx="41" cy="37" rx="3.600" ry="5" fill="#3d70c8"/></svg>
        <fit-text w="142">查看解读</fit-text></div>
    </div>
    <div class="close"><svg width="34" height="34"><path d="M1.500 1.500L32.500 32.500M32.500 1.500L1.500 32.500" stroke="#666" stroke-width="3.600"/></svg></div>`;
  }
});

customElements.define('stock-page', class extends Base {
  css() { return `:host{display:flex;flex-direction:column;position:relative;width:1080px;height:2400px;overflow:hidden;background:linear-gradient(90deg,#656565 0,#616161 30px,#616161 1060px,#636363)}
    :host>*{flex:none}`; }
  html() {
    return `<app-header></app-header><quote-strip></quote-strip><promo-row></promo-row><period-tabs></period-tabs><ma-row></ma-row>
      <candle-chart></candle-chart><volume-panel></volume-panel><macd-panel></macd-panel><info-tabs></info-tabs><bottom-nav></bottom-nav><home-bar></home-bar>
      <notice-overlay></notice-overlay>`;
  }
});
</script>
</body>
</html>
